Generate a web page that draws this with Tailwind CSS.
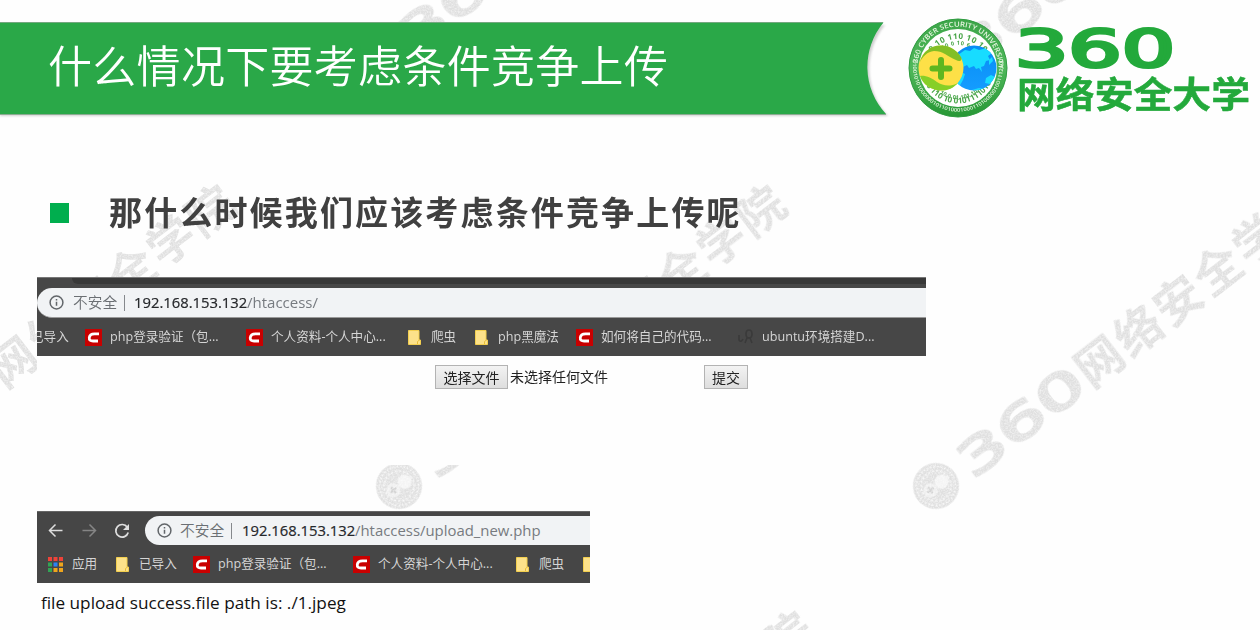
<!DOCTYPE html>
<html lang="zh-CN">
<head>
<meta charset="utf-8">
<title>什么情况下要考虑条件竞争上传</title>
<script src="https://cdn.jsdelivr.net/npm/@tailwindcss/browser@4"></script>
</head>
<body class="bg-white">
<div class="relative isolate flex h-[630px] w-[1260px] flex-col overflow-hidden bg-[#fefefe] font-['Open_Sans','Noto_Sans_CJK_SC',sans-serif]">

  <!-- Background watermark -->
  <svg class="absolute inset-0 -z-10" width="1260" height="630" viewBox="0 0 1260 630" aria-hidden="true">
    <defs>
      <filter id="grain" x="0" y="0" width="1" height="1"><feTurbulence type="fractalNoise" baseFrequency="0.6" numOctaves="2" seed="4" result="n"/><feColorMatrix in="n" values="0 0 0 0 1  0 0 0 0 1  0 0 0 0 1  1.2 0 0 0 -0.45" result="w"/><feComposite in="w" in2="SourceGraphic" operator="in" result="g"/><feMerge><feMergeNode in="SourceGraphic"/><feMergeNode in="g"/></feMerge></filter>
      <g id="mark" fill="#e0e0e0">
        <circle r="23"/>
        <g fill="none" stroke="#fafafa" stroke-width="1.3"><circle r="19.5" stroke-dasharray="1.5 2"/><circle r="15" stroke-dasharray="2 2"/></g>
        <circle cx="-7" cy="0" r="7" fill="#f0f0f0"/><circle cx="7" cy="0" r="7" fill="#f4f4f4"/>
        <path d="M-11 0h8M-7-4v8" stroke="#d4d4d4" stroke-width="2.5"/>
        <text x="33" y="18" font-family="DejaVu Sans" font-size="48" stroke="#e0e0e0" stroke-width="2.5" textLength="147" lengthAdjust="spacingAndGlyphs">360</text>
        <text x="182" y="18" font-family="Noto Sans CJK SC" font-weight="700" font-size="47" textLength="296">网络安全学院</text>
      </g>
    </defs>
    <g filter="url(#grain)">
      <use href="#mark" transform="translate(-151 486) rotate(-37.4)"/>
      <use href="#mark" transform="translate(399 486) rotate(-37.4)"/>
      <use href="#mark" transform="translate(936 486) rotate(-37.7)"/>
      <use href="#mark" transform="translate(377 61) rotate(-37.7)"/>
      <use href="#mark" transform="translate(934 77) rotate(-37.7)"/>
      <use href="#mark" transform="translate(428 914) rotate(-37.7)"/>
    </g>
  </svg>

  <!-- Banner shape -->
  <svg class="absolute left-0 top-0 -z-10" width="900" height="125" viewBox="0 0 900 125" aria-hidden="true">
    <path d="M0 25H885A69 69 0 0 0 888 116H0Z" fill="#999" opacity=".45" style="filter:blur(1px)"/>
    <path d="M0 22.5H883.500A69 69 0 0 0 886 114H0Z" fill="#2aa848"/>
    <path d="M0 22.500H883" stroke="#74a880"/><path d="M0 114.500H886" stroke="#8cab92"/>
  </svg>

  <header class="flex h-[125px] shrink-0">
    <h1 class="w-[908px] shrink-0 pl-[48px] pt-[34px] text-[44px] font-[350] leading-[64px] tracking-[0.3px] whitespace-nowrap text-white">什么情况下要考虑条件竞争上传</h1>
    <svg class="mt-[18px] h-[100px] w-[100px] shrink-0" viewBox="0 0 100 100">
      <defs>
        <linearGradient id="ring" x2="0" y2="1"><stop stop-color="#3da549"/><stop offset=".5" stop-color="#4fb85a"/><stop offset="1" stop-color="#279735"/></linearGradient>
        <linearGradient id="blue" x2="0" y2="1"><stop stop-color="#078df5"/><stop offset="1" stop-color="#159cff"/></linearGradient>
        <path id="top" d="M13.200 66A40.500 40.500 0 1 1 86.800 66"/>
        <path id="bot" d="M5.500 42A45 45 0 1 0 94.500 42"/>
        <path id="r1" d="M20 62A31.500 31.500 0 1 1 80 62"/>
        <path id="r2" d="M25 60A26 26 0 1 1 75 60"/>
        <path id="b1" d="M16 63A37 37 0 0 0 84 63"/>
        <path id="b2" d="M22 62A30 30 0 0 0 78 62"/>
        <clipPath id="globe"><circle cx="66" cy="50" r="22.500"/></clipPath>
      </defs>
      <circle cx="50" cy="50" r="49" fill="url(#ring)" stroke="#2f9b40"/>
      <circle cx="50" cy="50" r="39" fill="#fff"/>
      <g font-family="Open Sans" font-weight="600" fill="#e5f5df">
        <text font-size="7"><textPath href="#top" startOffset="21" textLength="125" lengthAdjust="spacingAndGlyphs">360 CYBER SECURITY UNIVERSITY</textPath></text>
        <text font-size="5"><textPath href="#bot" textLength="156" lengthAdjust="spacingAndGlyphs">01001010100000010110100010001101000001001112100</textPath></text>
      </g>
      <g font-family="Open Sans" font-weight="700" fill="#48a548">
        <text font-size="8"><textPath href="#r1" startOffset="24" textLength="78">10 10 110 10 10 10</textPath></text>
        <text font-size="5.500"><textPath href="#r2" startOffset="26" textLength="58">0 10 0 10 6 10 10 0</textPath></text>
        <text font-size="8"><textPath href="#b1" startOffset="5" textLength="79">0 110 10 0101111010</textPath></text>
        <text font-size="5.500"><textPath href="#b2" startOffset="8" textLength="58">10 10 0 01 101 10 01</textPath></text>
      </g>
      <circle cx="66" cy="50" r="22.500" fill="url(#blue)"/>
      <g clip-path="url(#globe)" fill="#18dcff">
        <path d="M50 37l7-5 5 1 4-3 5 2 8-2 5 5-4 3 2 4-4 1-2 5-3 1 1 5-3-4-3 1-2-3-5 2-2-3-4 2-2 5 4 2-2 6-4 7-3 3-2-8-4-4z"/>
        <path d="M78 60l5-3 4 2 1 5-6 2-5-1zM64 72l7-2 8 1-6 2zM81 42l3-3 1 4-4 4z"/>
      </g>
      <circle cx="33" cy="50" r="22.500" fill="#fde047"/>
      <path d="M12 44C14 34 24 26 35 27.600C43 28 50 34 53 39C55 43 51 44 48 42C39 38 35 33 26 33C19 34 15 38 12 44Z" fill="#82bf25"/>
      <path d="M12 58C15 67 24 73 35 72.600C43 72 47 68 50 65C42 69 35 68 29 64C24 60 17 57 12 58Z" fill="#86cf27"/>
      <path d="M33 42v17M24.500 50.500h17" stroke="#5fb620" stroke-width="6" stroke-linecap="round"/>
    </svg>
    <svg class="h-[125px] w-[252px] shrink-0" viewBox="1008 0 252 125">
      <text x="1015" y="66.500" font-family="DejaVu Sans" font-size="52" stroke="#23a93b" stroke-width="3.200" textLength="160" lengthAdjust="spacingAndGlyphs" fill="#23a93b">360</text>
      <text x="1017" y="107.500" font-family="Noto Sans CJK SC" font-weight="700" font-size="36" textLength="233" lengthAdjust="spacingAndGlyphs" fill="#23a93b" stroke="#23a93b" stroke-width=".5">网络安全大学</text>
    </svg>
  </header>

  <section class="flex h-[152px] shrink-0 items-start pl-[50px] pt-[78px]">
    <span class="h-5 w-[19px] bg-[#00ae4e]"></span>
    <h2 class="-mt-3.5 ml-[40px] text-[33px] font-bold leading-[48px] tracking-[2.15px] whitespace-nowrap text-[#404040]">那什么时候我们应该考虑条件竞争上传呢</h2>
  </section>

  <!-- Upload form page -->
  <section class="ml-[37px] h-[188px] w-[889px] shrink-0 overflow-hidden bg-[#fefefe]">
    <div class="flex h-[79px] flex-col overflow-hidden border-t border-[#777] bg-[#474747]">
      <div class="ml-[35px] h-[6px] shrink-0 rounded-bl-lg bg-[#383838]"></div>
      <div class="mt-1 flex h-[30px] shrink-0 items-center rounded-l-full border-b border-[#999] bg-[#f1f3f5] pl-3 whitespace-nowrap">
        <svg class="h-[15px] w-[15px]" viewBox="0 0 15 15" fill="none" stroke="#62666a" stroke-width="1.500"><circle cx="7.500" cy="7.500" r="6.400"/><path d="M7.500 6.700v4M7.500 4v1.500"/></svg>
        <span class="ml-[9px] w-[45px] text-[14.7px] font-[350] text-[#6b6f73]">不安全</span>
        <span class="ml-[6px] h-4 w-px bg-[#85888c]"></span>
        <span class="ml-[9px] w-[113px] text-[14.8px] text-[#25272a] [-webkit-text-stroke:0.2px]">192.168.153.132</span>
        <span class="text-[15px] text-[#777b80]">/htaccess/</span>
      </div>
      <div class="flex flex-1 items-center pt-px text-[12.6px] whitespace-nowrap text-[#d5d5d5]">
        <span class="-ml-[6px] w-[54px] shrink-0">已导入</span>
        <svg class="h-[17px] w-[17px] shrink-0"><use href="#c-icon"/></svg><span class="ml-2 w-[136px] shrink-0">php登录验证（包...</span>
        <svg class="h-[17px] w-[17px] shrink-0"><use href="#c-icon"/></svg><span class="ml-2 w-[137px] shrink-0">个人资料-个人中心...</span>
        <svg class="h-[17px] w-[13px] shrink-0"><use href="#folder"/></svg><span class="ml-[10px] w-[44px] shrink-0">爬虫</span>
        <svg class="h-[17px] w-[13px] shrink-0"><use href="#folder"/></svg><span class="ml-[10px] w-[78px] shrink-0">php黑魔法</span>
        <svg class="h-[17px] w-[17px] shrink-0"><use href="#c-icon"/></svg><span class="ml-2 w-[137px] shrink-0">如何将自己的代码...</span>
        <svg class="h-[17px] w-[17px] shrink-0" viewBox="0 0 17 17" fill="none" stroke="#3a3a3a" stroke-width="1.600"><path d="M1 6v5q2 3 4-1M8 5q0-4 3-4t3 4-3 4-3-4M9 9l-2 5M12 9l2 5"/></svg><span class="ml-[7px]">ubuntu环境搭建D...</span>
      </div>
    </div>
    <div class="flex items-center pl-[398px] pt-[8px] text-[14px] leading-[24px] whitespace-nowrap text-[#222]">
      <button class="h-6 w-[73px] border border-[#b3b3b3] bg-linear-to-b from-[#f3f3f3] to-[#dedede] leading-[24px]">选择文件</button>
      <span class="ml-[2px] w-[194px] pt-px">未选择任何文件</span>
      <button class="h-6 w-[44px] border border-[#b3b3b3] bg-linear-to-b from-[#f3f3f3] to-[#dedede] leading-[24px]">提交</button>
    </div>
  </section>

  <!-- Upload result page -->
  <section class="ml-[37px] mt-[46px] h-[119px] w-[553px] shrink-0 overflow-hidden bg-[#fefefe]">
    <div class="flex h-[72px] flex-col overflow-hidden border-t border-[#666] bg-[#464646]">
      <div class="mt-1 flex h-[29px] shrink-0 items-center pl-[11px]">
        <svg class="h-4 w-4" viewBox="0 0 16 16" fill="none" stroke="#dedede" stroke-width="1.500"><path d="M14.500 7.500H1.500M7.500 1.500L1.500 7.500l6 6"/></svg>
        <svg class="ml-[17px] h-4 w-4" viewBox="0 0 16 16" fill="none" stroke="#858585" stroke-width="1.500"><path d="M1.500 7.500h13M8.500 1.500l6 6-6 6"/></svg>
        <svg class="ml-[17px] h-4 w-4" viewBox="0 0 16 16"><path d="M13.300 4.200A6.300 6.300 0 1 0 14.200 9.500" fill="none" stroke="#dedede" stroke-width="1.700"/><path d="M15 1v6H9z" fill="#dedede"/></svg>
        <div class="ml-[15px] flex h-[29px] flex-1 items-center rounded-l-full bg-[#f1f3f5] pl-3 whitespace-nowrap">
          <svg class="h-[15px] w-[15px] shrink-0" viewBox="0 0 15 15" fill="none" stroke="#62666a" stroke-width="1.500"><circle cx="7.500" cy="7.500" r="6.400"/><path d="M7.500 6.700v4M7.500 4v1.500"/></svg>
          <span class="ml-[8px] w-[45px] shrink-0 text-[14.7px] font-[350] text-[#6b6f73]">不安全</span>
          <span class="ml-[6px] h-4 w-px bg-[#85888c]"></span>
          <span class="ml-[10px] w-[113px] shrink-0 text-[14.8px] text-[#25272a] [-webkit-text-stroke:0.2px]">192.168.153.132</span>
          <span class="text-[14.9px] text-[#777b80]">/htaccess/upload_new.php</span>
        </div>
      </div>
      <div class="flex flex-1 items-center pl-[11px] pt-px text-[12.6px] whitespace-nowrap text-[#d5d5d5]">
        <svg class="h-[15px] w-[15px] shrink-0" viewBox="0 0 15 15"><path d="M0 0h4v4H0zM5.500 0h4v4h-4zM11 0h4v4h-4z" fill="#ee4339"/><path d="M0 5.500h4v4H0zM0 11h4v4H0z" fill="#31a455"/><path d="M5.500 5.500h4v4h-4z" fill="#2c82f2"/><path d="M11 5.500h4v4h-4zM5.500 11h4v4h-4zM11 11h4v4h-4z" fill="#efa51c"/></svg><span class="ml-[9px] w-[44px] shrink-0">应用</span>
        <svg class="h-[17px] w-[13px] shrink-0"><use href="#folder"/></svg><span class="ml-[10px] w-[54px] shrink-0">已导入</span>
        <svg class="h-[17px] w-[17px] shrink-0"><use href="#c-icon"/></svg><span class="ml-2 w-[135px] shrink-0">php登录验证（包...</span>
        <svg class="h-[17px] w-[17px] shrink-0"><use href="#c-icon"/></svg><span class="ml-2 w-[138px] shrink-0">个人资料-个人中心...</span>
        <svg class="h-[17px] w-[13px] shrink-0"><use href="#folder"/></svg><span class="ml-[10px] w-[44px] shrink-0">爬虫</span>
        <svg class="h-[17px] w-[13px] shrink-0"><use href="#folder"/></svg>
      </div>
    </div>
    <p class="pl-1 pt-[8px] text-[17.2px] leading-6 whitespace-nowrap text-[#111]">file upload success.file path is: ./1.jpeg</p>
  </section>
</div>

<svg width="0" height="0" class="absolute">
  <symbol id="c-icon" viewBox="0 0 17 17"><path d="M0 0h17v17H0z" fill="#c90000"/><path d="M14 4.800H9.500Q4.800 4.800 4.300 8.500T8.500 12H13" fill="none" stroke="#fff" stroke-width="2.800"/></symbol>
  <symbol id="folder" viewBox="0 0 13 17"><path d="M.500 1.500h10.500v9.500h1.500v4.500h-12z" fill="#fce18a" stroke="#f3cf4f"/><path d="M9.500 15v-2.500l2-1.500" fill="none" stroke="#e9bd36"/></symbol>
</svg>
</body>
</html>
